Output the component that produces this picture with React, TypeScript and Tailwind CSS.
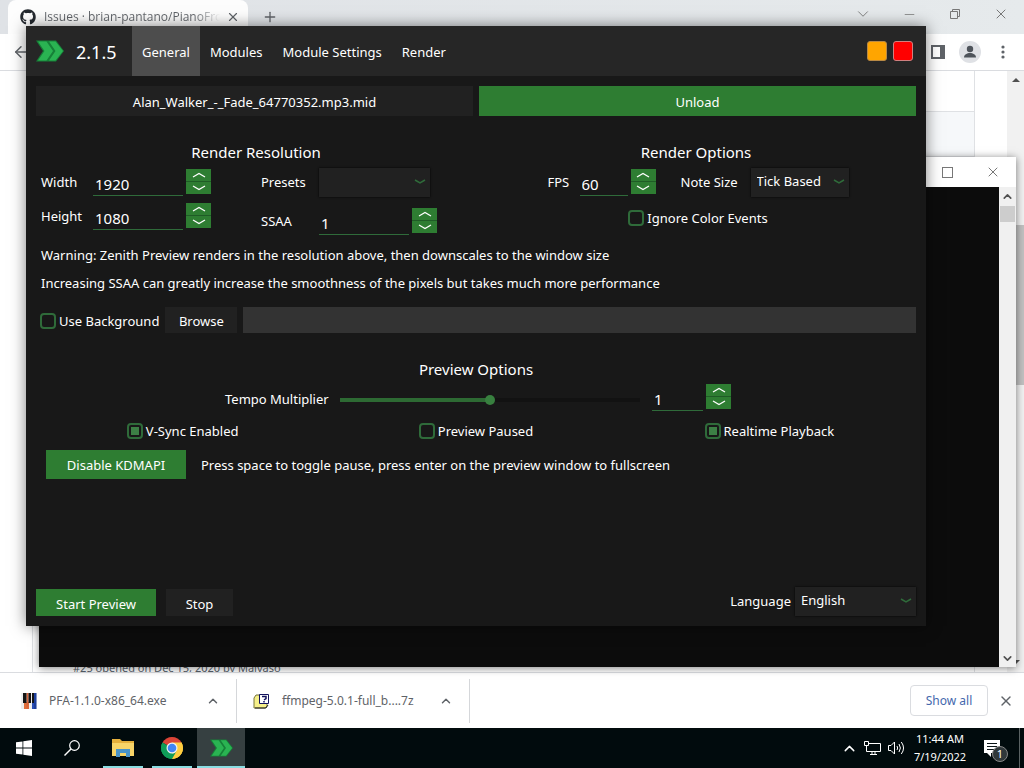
import React from 'react';
import { ArrowLeft, ChevronDown, ChevronUp, Minus, Plus, X } from 'lucide-react';
import { FaGithub } from 'react-icons/fa';

const ZenithLogo = ({ className = '' }: { className?: string }) => (
  <svg viewBox="0 0 28 22" className={className} aria-hidden="true">
    <path d="M0 .5h20l8 10.500-8 10.500H0L7 11z" fill="#168038" />
    <path d="M2 1.500h8.500L17 11l-6.500 9.500H2L8.500 11z" fill="#2ab352" />
    <path d="M13 1.500h6.500L27 11l-7.500 9.500H13L19.500 11z" fill="#2ab352" />
  </svg>
);

/* ---------- form controls ---------- */

interface NumberBoxProps {
  id: string;
  value: string;
  width: string;
  label: string;
}

const NumberBox: React.FC<NumberBoxProps> = ({ id, value, width, label }) => (
  <div className="flex items-start gap-[3px]">
    <input
      id={id}
      type="text"
      aria-label={label}
      defaultValue={value}
      className={`h-7 border-b border-[#2f6b3a] bg-transparent px-0.5 pt-1 text-[15px] outline-none ${width}`}
    />
    <div className="mt-px flex h-[25px] w-[25px] flex-col gap-px bg-[#1f5c26]">
      <button aria-label={`Increase ${label}`} className="flex flex-1 items-center justify-center bg-[#2e7d32]">
        <svg viewBox="0 0 14 6" className="h-1.5 w-3.5 fill-none stroke-white">
          <path d="M1 5l6-3.500L13 5" strokeWidth="1.300" />
        </svg>
      </button>
      <button aria-label={`Decrease ${label}`} className="flex flex-1 items-center justify-center bg-[#2e7d32]">
        <svg viewBox="0 0 14 6" className="h-1.5 w-3.5 fill-none stroke-white">
          <path d="M1 1l6 3.500L13 1" strokeWidth="1.300" />
        </svg>
      </button>
    </div>
  </div>
);

interface SelectBoxProps {
  id: string;
  options: string[];
  width: string;
}

const SelectBox: React.FC<SelectBoxProps> = ({ id, options, width }) => (
  <div className={`relative ${width}`}>
    <select id={id} className="h-[29px] w-full appearance-none bg-[#212121] px-1.5 pb-1 shadow-[0_0_2px_#000] outline-none">
      {options.map((o) => (
        <option key={o}>{o}</option>
      ))}
    </select>
    <svg viewBox="0 0 12 6" className="pointer-events-none absolute top-[11px] right-1 h-1.5 w-3 fill-none stroke-[#2f6b3a]">
      <path d="M1 1l5 3L11 1" strokeWidth="1.500" />
    </svg>
  </div>
);

const CheckBox = ({ label, checked = false }: { label: string; checked?: boolean }) => (
  <label className="flex items-center gap-[3px]">
    <input
      type="checkbox"
      defaultChecked={checked}
      className="size-4 appearance-none rounded border-2 border-[#2f6b3a] bg-clip-content p-0.5 checked:bg-[#3c7f45]"
    />
    {label}
  </label>
);

/* ---------- Zenith window ---------- */

const tabs = ['General', 'Modules', 'Module Settings', 'Render'];

const ZenithHeader = () => (
  <header className="flex h-[50px] shrink-0 items-center bg-[#262626] pr-[13px] pl-2.5">
    <ZenithLogo className="h-[22px] w-7" />
    <span className="w-14 pt-0.5 pl-3 text-[18px]">2.1.5</span>
    <nav className="ml-3 flex h-full">
      {tabs.map((tab, i) => (
        <button key={tab} className={`h-full px-2.5 pt-0.5 ${i === 0 ? 'bg-[#4d4d4d]' : ''}`}>
          {tab}
        </button>
      ))}
    </nav>
    <div className="ml-auto flex gap-1.5">
      <button aria-label="Minimize" className="size-5 rounded-[3px] border border-[#b98a45] bg-[#ffa500]" />
      <button aria-label="Close" className="size-5 rounded-[3px] border border-[#d08080] bg-[#ff0000]" />
    </div>
  </header>
);

const RenderResolution = () => (
  <section>
    <h2 className="text-center text-[15px] leading-6">Render Resolution</h2>
    <div className="mt-1 flex gap-[50px] pl-[5px]">
      <div className="flex flex-col gap-[5px]">
        <div className="flex">
          <label htmlFor="width" className="w-[52px] leading-[29px]">Width</label>
          <NumberBox id="width" label="Width" value="1920" width="w-[90px]" />
        </div>
        <div className="flex">
          <label htmlFor="height" className="w-[52px] leading-[29px]">Height</label>
          <NumberBox id="height" label="Height" value="1080" width="w-[90px]" />
        </div>
      </div>
      <div className="flex flex-col gap-2.5">
        <div className="flex">
          <label htmlFor="presets" className="w-[58px] leading-[29px]">Presets</label>
          <SelectBox id="presets" options={['']} width="w-[111px]" />
        </div>
        <div className="flex">
          <label htmlFor="ssaa" className="w-[58px] leading-[29px]">SSAA</label>
          <NumberBox id="ssaa" label="SSAA" value="1" width="w-[90px]" />
        </div>
      </div>
    </div>
  </section>
);

const RenderOptions = () => (
  <section className="flex flex-col items-center">
    <h2 className="text-[15px] leading-6">Render Options</h2>
    <div className="mt-1 flex pl-1">
      <label htmlFor="fps" className="w-8 leading-[29px]">FPS</label>
      <NumberBox id="fps" label="FPS" value="60" width="w-12" />
      <label htmlFor="notesize" className="ml-[25px] w-[70px] leading-[29px]">Note Size</label>
      <SelectBox id="notesize" options={['Tick Based']} width="w-[98px]" />
    </div>
    <div className="mt-[11px] pl-1">
      <CheckBox label="Ignore Color Events" />
    </div>
  </section>
);

const ZenithWindow = () => (
  <main className="absolute top-[26px] right-[98px] bottom-[142px] left-[26px] flex flex-col bg-[#181818] text-[13px] leading-5 text-white shadow-[0_0_14px_rgba(0,0,0,0.5)]">
    <ZenithHeader />
    <div className="flex flex-1 flex-col p-2.5">
      <div className="flex h-[30px] gap-1.5">
        <div className="flex flex-1 items-center justify-center bg-[#212121] pt-0.5">Alan_Walker_-_Fade_64770352.mp3.mid</div>
        <button className="flex-1 bg-[#2e7d32] pt-0.5">Unload</button>
      </div>

      <div className="mt-6 grid grid-cols-2">
        <RenderResolution />
        <RenderOptions />
      </div>

      <p className="mt-[9px] pl-[5px]">Warning: Zenith Preview renders in the resolution above, then downscales to the window size</p>
      <p className="mt-2 pl-[5px]">Increasing SSAA can greatly increase the smoothness of the pixels but takes much more performance</p>

      <div className="mt-3.5 flex h-[26px] pl-1">
        <div className="flex pt-0.5">
          <CheckBox label="Use Background" />
        </div>
        <button className="ml-1.5 w-[72px] bg-[#212121] pt-0.5">Browse</button>
        <input aria-label="Background path" className="ml-1.5 min-w-0 flex-1 bg-[#333333] px-1 outline-none" />
      </div>

      <h2 className="mt-6 text-center text-[15px] leading-6">Preview Options</h2>
      <div className="mt-0.5 flex justify-center pl-1">
        <label htmlFor="tempo" className="w-[115px] leading-8">Tempo Multiplier</label>
        <input
          id="tempo"
          type="range"
          defaultValue={50}
          className="mt-[15px] h-1 w-[300px] appearance-none bg-[linear-gradient(to_right,#2d6a33_50%,#121212_50%)] [&::-webkit-slider-thumb]:size-2.5 [&::-webkit-slider-thumb]:appearance-none [&::-webkit-slider-thumb]:rounded-full [&::-webkit-slider-thumb]:bg-[#38803f]"
        />
        <div className="ml-3">
          <NumberBox id="tempo-value" label="Tempo value" value="1" width="w-[51px]" />
        </div>
      </div>

      <div className="mt-1.5 grid grid-cols-3 justify-items-center">
        <CheckBox label="V-Sync Enabled" checked />
        <CheckBox label="Preview Paused" />
        <CheckBox label="Realtime Playback" checked />
      </div>

      <div className="mt-[9px] flex items-center gap-[15px] pl-2.5">
        <button className="h-[29px] w-[140px] bg-[#2e7d32]">Disable KDMAPI</button>
        <span>Press space to toggle pause, press enter on the preview window to fullscreen</span>
      </div>

      <div className="mt-auto flex items-end">
        <button className="h-[27px] w-[120px] bg-[#2e7d32] pt-0.5">Start Preview</button>
        <button className="ml-2.5 h-[27px] w-[67px] bg-[#212121] pt-0.5">Stop</button>
        <label htmlFor="language" className="ml-auto pr-1 leading-[30px]">Language</label>
        <SelectBox id="language" options={['English']} width="w-[121px]" />
      </div>
    </div>
  </main>
);

/* ---------- windows behind ---------- */

const ConsoleWindow = () => (
  <section className="absolute top-[157px] right-2 bottom-[101px] left-[39px] flex flex-col bg-white shadow-[0_1px_8px_rgba(0,0,0,0.5)]">
    <div className="flex h-[30px] shrink-0 items-center justify-end text-[#777]">
      <button aria-label="Maximize console" className="flex w-[46px] justify-center">
        <span className="size-[11px] border border-[#777]" />
      </button>
      <button aria-label="Close console" className="flex w-[46px] justify-center">
        <X size={16} strokeWidth={1.5} />
      </button>
    </div>
    <div className="flex flex-1 bg-[#0c0c0c]">
      <div className="ml-auto flex w-[17px] flex-col items-center bg-[#f0f0f0] text-[#505050]">
        <ChevronUp size={13} strokeWidth={3} className="mt-[3px]" />
        <div className="mt-[3px] h-4 w-[15px] bg-[#cdcdcd]" />
        <ChevronDown size={13} strokeWidth={3} className="mt-auto mb-0.5" />
      </div>
    </div>
  </section>
);

const BrowserTabs = () => (
  <div className="flex h-[34px] shrink-0 items-stretch bg-linear-to-r from-[#dfe2e6] to-[#e6eaec] pl-2">
    <div className="flex w-60 items-center rounded-t-lg bg-[#fdfdfd] pr-2 pl-3">
      <FaGithub size={16} className="shrink-0 text-[#24292f]" />
      <span className="ml-2 flex-1 overflow-hidden bg-linear-to-r from-[#5f6368] from-85% to-transparent bg-clip-text font-['Open_Sans',sans-serif] text-[12px] whitespace-nowrap text-transparent">
        Issues · brian-pantano/PianoFron
      </span>
      <button aria-label="Close tab" className="ml-1.5">
        <X size={14} className="text-[#5f6368]" />
      </button>
    </div>
    <button aria-label="New tab" className="ml-3.5">
      <Plus size={16} className="text-[#5f6368]" />
    </button>
    <div className="ml-auto flex h-7 text-[#777]">
      <button aria-label="Search tabs" className="flex w-[46px] items-center justify-center">
        <ChevronDown size={18} strokeWidth={1.2} />
      </button>
      <button aria-label="Minimize browser" className="flex w-[46px] items-center justify-center">
        <Minus size={15} strokeWidth={1.2} />
      </button>
      <button aria-label="Restore browser" className="flex w-[46px] items-center justify-center">
        <svg viewBox="0 0 10 10" className="size-2.5 fill-none stroke-[#777]">
          <path d="M.5 2.500h7v7h-7zM2.500 2.500v-2h7v7h-2" />
        </svg>
      </button>
      <button aria-label="Close browser" className="flex w-[46px] items-center justify-center">
        <X size={16} strokeWidth={1.5} />
      </button>
    </div>
  </div>
);

const BrowserToolbar = () => (
  <div className="flex h-[37px] shrink-0 items-center border-b border-[#dadce0] bg-white pr-3 pl-3">
    <button aria-label="Back">
      <ArrowLeft size={18} className="text-[#5f6368]" />
    </button>
    <button aria-label="Side panel" className="ml-auto">
      <svg viewBox="0 0 14 14" className="size-3.5">
        <path d="M1 1h12v12H1z" fill="none" stroke="#5f6368" strokeWidth="2" />
        <path d="M9 0h5v14H9z" fill="#5f6368" />
      </svg>
    </button>
    <button aria-label="Profile" className="ml-3.5">
      <svg viewBox="0 0 22 22" className="size-[22px]">
        <circle cx="11" cy="11" r="11" fill="#dfe1e5" />
        <circle cx="11" cy="8" r="3.200" fill="#4f545b" />
        <path d="M5 16.500c0-3 3-4.500 6-4.500s6 1.500 6 4.500z" fill="#4f545b" />
      </svg>
    </button>
    <button aria-label="Browser menu" className="ml-[13px]">
      <svg viewBox="0 0 18 16" className="h-4 w-[18px] fill-[#5f6368]">
        <circle cx="9" cy="3" r="1.600" />
        <circle cx="9" cy="8" r="1.600" />
        <circle cx="9" cy="13" r="1.600" />
      </svg>
    </button>
  </div>
);

const BrowserPage = () => (
  <div className="flex min-h-0 flex-1 overflow-hidden bg-white">
    <div className="mr-8 ml-8 flex flex-1 flex-col border-x border-[#dfe1e4]">
      <div className="h-[41px] shrink-0 border-b border-[#dfe1e4]" />
      <div className="h-[45px] shrink-0 border-b border-[#dfe1e4] bg-[#f6f8fa]" />
      <div className="mt-auto -mb-1.5 shrink-0 pl-10 text-[11px] leading-5 text-[#57606a]">#25 opened on Dec 15, 2020 by Malvaso</div>
    </div>
    <div className="flex w-[17px] flex-col items-center bg-[#f1f1f1]">
      <svg viewBox="0 0 8 4" className="mt-[7px] h-1 w-2 fill-[#505050]">
        <path d="M0 4l4-4 4 4z" />
      </svg>
      <div className="mt-[143px] h-40 w-full bg-[#c1c1c1]" />
      <svg viewBox="0 0 8 4" className="mt-auto mb-2 h-1 w-2 fill-[#505050]">
        <path d="M0 0l4 4 4-4z" />
      </svg>
    </div>
  </div>
);

const PianoIcon = () => (
  <svg viewBox="0 0 16 16" className="size-4">
    <path d="M0 0h16v16H0z" fill="#eee" />
    <path d="M3 9h5v7H3z" fill="#e0703c" />
    <path d="M5.500 0h2v16h-2z" fill="#d9653a" />
    <path d="M11 9h4v7h-4z" fill="#2b4fb5" />
    <path d="M13 0h2.500v16H13z" fill="#1d3f9d" />
    <path d="M2 0h3.500v10H2zM7.500 0H10v10H7.500zM11 0h2v10h-2z" fill="#151515" />
  </svg>
);

const ArchiveIcon = () => (
  <svg viewBox="0 0 17 16" className="h-4 w-[17px]">
    <path d="M1 5l2-3h5v2h6v9l-2 2H1z" fill="#f6f08a" stroke="#77743a" />
    <path d="M2 15h11l2-3" fill="none" stroke="#222" />
    <path d="M6.500 1.500h9v9h-9z" fill="#fff" stroke="#14145e" />
    <path d="M9 3.500h4v2l-2 1.500M11 8v1.500" fill="none" stroke="#14145e" strokeWidth="1.500" />
  </svg>
);

const DownloadItem = ({ name, icon, pad }: { name: string; icon: React.ReactNode; pad: string }) => (
  <div className={`flex h-11 items-center border-r border-[#d5d7da] pr-4 ${pad}`}>
    {icon}
    <span className="ml-3 flex-1">{name}</span>
    <button aria-label={`Options for ${name}`}>
      <ChevronUp size={14} strokeWidth={2.5} className="text-[#5f6368]" />
    </button>
  </div>
);

const DownloadBar = () => (
  <div className="flex h-14 shrink-0 items-center border-t border-[#dadce0] bg-white pr-2.5 text-[12px] text-[#5f6368]">
    <DownloadItem name="PFA-1.1.0-x86_64.exe" icon={<PianoIcon />} pad="w-[237px] pl-[21px]" />
    <DownloadItem name="ffmpeg-5.0.1-full_b....7z" icon={<ArchiveIcon />} pad="w-[233px] pl-4" />
    <button className="ml-auto h-[31px] w-[78px] rounded border border-[#dadce0] text-[#4468ad]">Show all</button>
    <button aria-label="Close downloads" className="ml-2.5">
      <X size={16} className="text-[#5f6368]" />
    </button>
  </div>
);

/* ---------- taskbar ---------- */

const TaskButton = ({ label, state = 'idle', children }: { label: string; state?: 'idle' | 'open' | 'active'; children: React.ReactNode }) => (
  <button
    aria-label={label}
    className={`flex h-10 w-12 flex-col items-center ${state === 'active' ? 'bg-[#364041]' : ''}`}
  >
    <span className="flex flex-1 items-center">{children}</span>
    {state !== 'idle' && <span className={`h-0.5 bg-[#8adde2] ${state === 'active' ? 'w-full' : 'w-10'}`} />}
  </button>
);

const Taskbar = () => (
  <footer className="flex h-10 shrink-0 items-center bg-[#010b0d] text-white">
    <TaskButton label="Start">
      <svg viewBox="0 0 16 16" className="size-4 fill-white">
        <path d="M0 2.300l6.500-.9v6.200H0zM7.300 1.300L16 0v7.600H7.300zM0 8.400h6.500v6.200L0 13.700zM7.300 8.400H16V16l-8.700-1.300z" />
      </svg>
    </TaskButton>
    <TaskButton label="Search">
      <svg viewBox="0 0 16 16" className="size-4 fill-none stroke-white">
        <circle cx="10.500" cy="5.500" r="4.800" strokeWidth="1.200" />
        <path d="M7 9L.5 15.500" strokeWidth="1.400" />
      </svg>
    </TaskButton>
    <div className="ml-[3px] flex gap-px">
      <TaskButton label="File Explorer" state="open">
        <svg viewBox="0 0 22 18" className="mt-0.5 h-[18px] w-[22px]">
          <path d="M0 0h8l2 2h12v15H0z" fill="#e5b03c" />
          <path d="M0 4h22v13H0z" fill="#f8d568" />
          <path d="M4 18v-8h14v8h-4v-4H8v4z" fill="#4a94c8" />
        </svg>
      </TaskButton>
      <TaskButton label="Chrome" state="open">
        <svg viewBox="0 0 24 24" className="mt-0.5 size-[22px]">
          <path d="M12 12L1.610 6a12 12 0 0 1 20.780 0z" fill="#db4437" />
          <path d="M12 12L22.390 6A12 12 0 0 1 12 24z" fill="#ffcd40" />
          <path d="M12 12v12A12 12 0 0 1 1.610 6z" fill="#0f9d58" />
          <path d="M12 6h10.390A12 12 0 0 1 12 24l5.200-9z" fill="#ffcd40" />
          <path d="M1.610 6l5.200 9A6 6 0 0 0 17.200 15L12 24A12 12 0 0 1 1.610 6z" fill="#0f9d58" />
          <circle cx="12" cy="12" r="6" fill="#f1f1f1" />
          <circle cx="12" cy="12" r="4.700" fill="#4285f4" />
        </svg>
      </TaskButton>
      <TaskButton label="Zenith" state="active">
        <ZenithLogo className="mt-0.5 h-[18px] w-[23px]" />
      </TaskButton>
    </div>

    <div className="ml-auto flex h-full items-center">
      <button aria-label="Show hidden icons">
        <ChevronUp size={17} strokeWidth={2} />
      </button>
      <svg viewBox="0 0 17 15" className="ml-1.5 h-[15px] w-[17px] fill-none stroke-white">
        <path d="M5 2.500h11.500v8H5M.5.500h4v4h-4zM2.500 4.500v6h3M8 10.500v3M6 13.500h7M11 10.500v3" />
      </svg>
      <svg viewBox="0 0 17 16" className="ml-[7px] h-4 w-[17px] fill-none stroke-white">
        <path d="M.5 5.500H3l3.500-3.500v12L3 10.500H.5zM9 6q1.300 2 0 4M11 4q2.800 4 0 8M13.300 2q4.500 6 0 12" />
      </svg>
      <div className="ml-2 w-[54px] text-center text-[11px] leading-[18px] whitespace-nowrap">
        <div>11:44 AM</div>
        <div>7/19/2022</div>
      </div>
      <button aria-label="Notifications" className="relative mr-[11px] ml-[17px] h-6 w-6">
        <svg viewBox="0 0 16 17" className="h-[17px] w-4">
          <path d="M0 0h16v13H7v4l-4-4H0z" fill="#fff" />
          <path d="M3 3.500h10M3 6.500h10M3 9.500h7" stroke="#0b1517" />
        </svg>
        <span className="absolute right-0 -bottom-0.5 size-4 rounded-full border border-[#888] bg-[#30383a] text-[11px] leading-[14px]">1</span>
      </button>
      <div className="mr-1 h-full w-px bg-[#5a6263]" />
    </div>
  </footer>
);

export default function App() {
  return (
    <div className="relative flex h-screen flex-col overflow-hidden font-['Noto_Sans','Open_Sans',sans-serif]">
      <BrowserTabs />
      <BrowserToolbar />
      <BrowserPage />
      <DownloadBar />
      <Taskbar />
      <ConsoleWindow />
      <ZenithWindow />
    </div>
  );
}
